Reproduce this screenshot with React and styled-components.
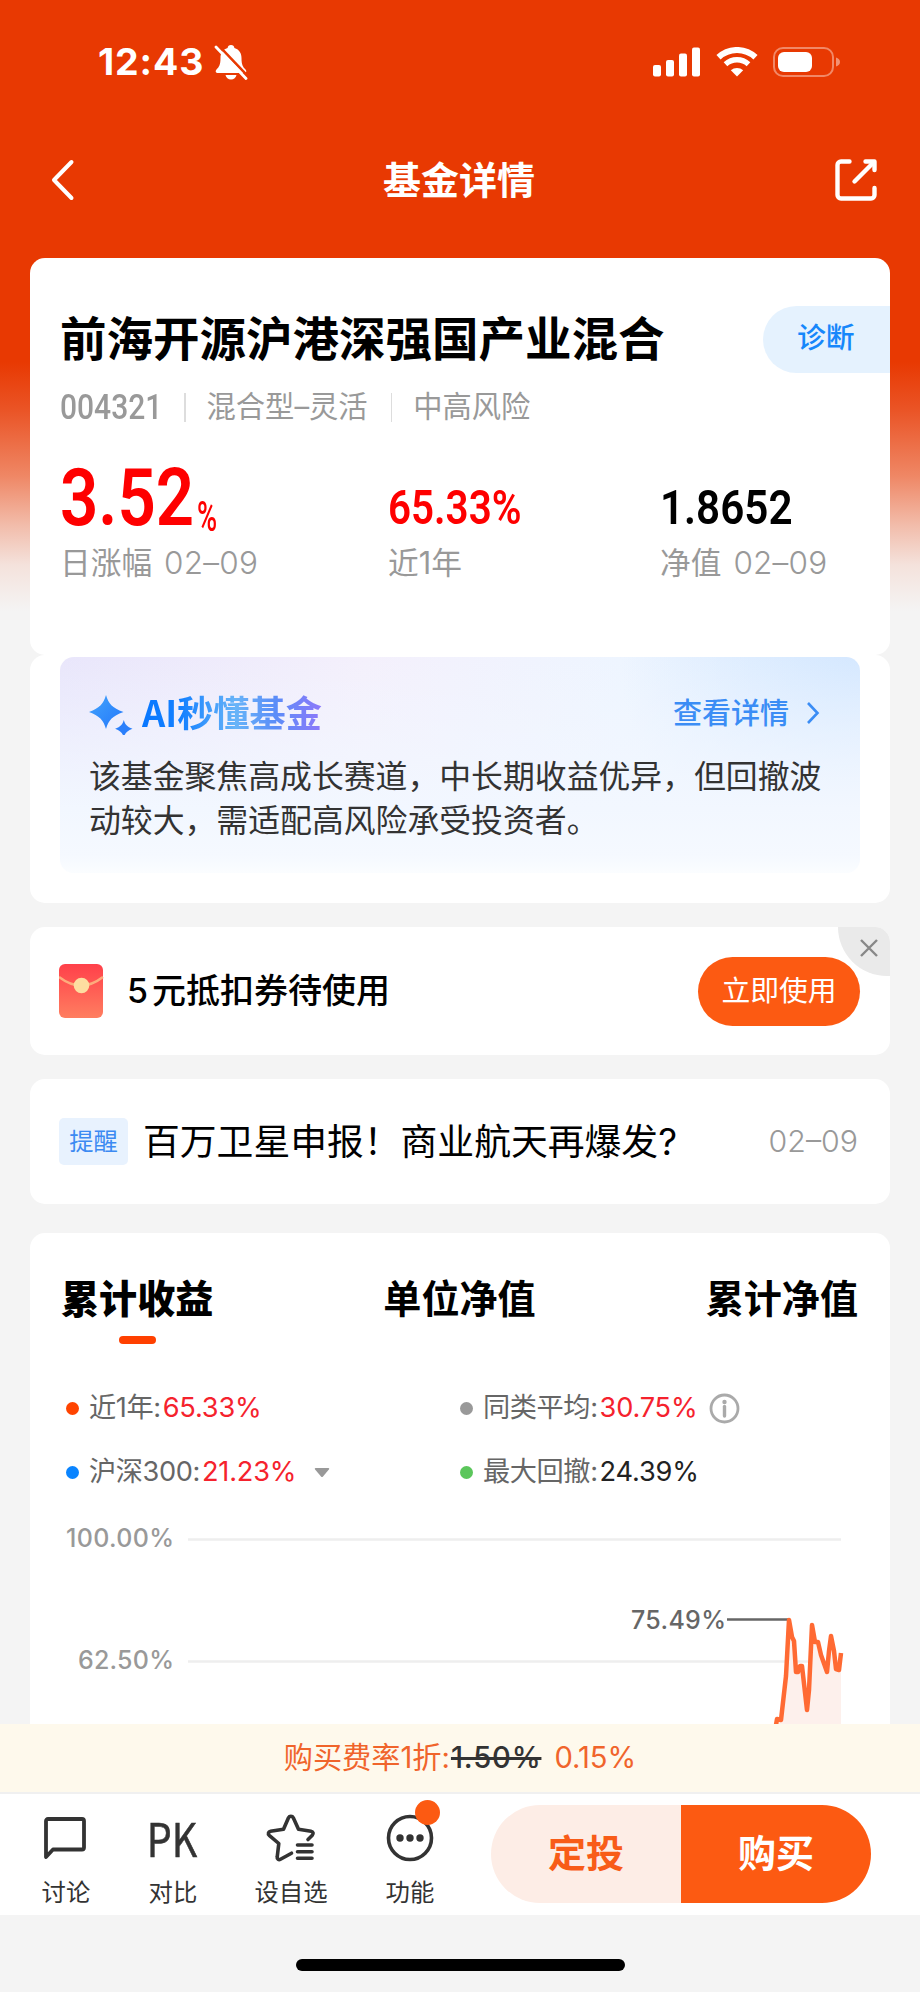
import styled, { createGlobalStyle } from "styled-components";

const GlobalStyle = createGlobalStyle`
  * {
    box-sizing: border-box;
    margin: 0;
    padding: 0;
  }

  body {
    background: #f4f4f4;
    font-family: Inter, "Noto Sans CJK SC", sans-serif;
    line-height: 1;
    color: #000;
  }

  svg {
    display: block;
    flex: none;
  }
`;

const Page = styled.div`
  width: 920px;
  height: 1992px;
  display: flex;
  flex-direction: column;
  overflow: hidden;
  white-space: nowrap;
  background: #f4f4f4;
`;

const Content = styled.main`
  height: 1724px;
  padding: 0 30px;
  overflow: hidden;
  background: linear-gradient(
    180deg,
    #e83902 0,
    #e83902 362px,
    #ea5426 410px,
    #ef8765 476px,
    #f2bcaa 525px,
    #f4e2dc 565px,
    #f4f4f4 612px
  );
`;

const StatusBar = styled.div`
  height: 124px;
  padding: 0 49px 0 68px;
  display: flex;
  align-items: center;
  justify-content: space-between;
  color: #fff;
`;

const StatusGroup = styled.div`
  display: flex;
  align-items: center;
  gap: ${({ $gap }) => $gap}px;
`;

const Clock = styled.span`
  font-size: 37.5px;
  font-weight: 700;
  letter-spacing: 0.9px;
  width: 109px;
`;

const NavBar = styled.header`
  height: 134px;
  padding: 0 13px 22px 21px;
  display: flex;
  align-items: center;
  justify-content: space-between;
  color: #fff;
`;

const NavTitle = styled.h1`
  font-size: 38px;
  font-weight: 700;
  margin-left: 8px;
`;

const Card = styled.section`
  background: #fff;
  border-radius: 15px;
`;

const SummaryCard = styled(Card)`
  height: 397px;
  padding: 48px 0 0 30px;
`;

const SummaryTop = styled.div`
  height: 67px;
  display: flex;
  align-items: center;
  justify-content: space-between;
`;

const FundName = styled.h2`
  font-size: 46.5px;
  font-weight: 600;
`;

const DiagnoseButton = styled.button`
  width: 127px;
  height: 67px;
  padding: 0 0 3px 34px;
  border: 0;
  border-radius: 34px 0 0 34px;
  background: #e5f2fe;
  color: #1687fb;
  font: 500 28.8px/1 Inter, "Noto Sans CJK SC", sans-serif;
  text-align: left;
`;

const MetaRow = styled.div`
  height: 34px;
  margin-top: 17px;
  display: flex;
  align-items: center;
  color: #999;
  font-size: 29.3px;
`;

const MetaDivider = styled.i`
  width: 1.5px;
  height: 29px;
  background: #ddd;
  margin: 0 21px 0 ${({ $left }) => $left}px;
`;

const Figure = styled.span`
  display: inline-block;
  width: ${({ $width }) => $width}px;
  font-family: Roboto, sans-serif;
  font-weight: ${({ $weight }) => $weight || 600};
  font-size: ${({ $size }) => $size}px;
  transform: scaleX(${({ $squeeze }) => $squeeze});
  transform-origin: 0 50%;
`;

const Metrics = styled.div`
  margin-top: 42px;
  display: grid;
  grid-template-columns: 328px 272px 1fr;
`;

const Metric = styled.div`
  color: ${({ $color }) => $color};
`;

const MetricValue = styled.div`
  height: 72px;
  padding-bottom: ${({ $lift }) => $lift || 0}px;
  display: flex;
  align-items: flex-end;
`;

const MetricLabel = styled.div`
  margin-top: 8px;
  display: flex;
  align-items: center;
  height: 34px;
  gap: 12px;
  font-size: 30.7px;
  color: #999;
`;

const ThinNumber = styled.span`
  font-weight: 300;
  font-size: 31.5px;
  letter-spacing: 0.2px;
`;

const AiCard = styled(Card)`
  height: 248px;
  padding: 2px 30px 0;
`;

const AiPanel = styled.div`
  height: 216px;
  padding: 34px 29px 0;
  border-radius: 14px;
  background: linear-gradient(180deg, rgba(255, 255, 255, 0) 0%, #f2f7ff 70%, #f5f9ff 92%, #fbfdff 100%),
    radial-gradient(circle at 100% 0, #d5e8ff 0, rgba(225, 239, 255, 0) 240px),
    linear-gradient(90deg, #e9e6fb 0%, #f4f0fc 38%, #eef5ff 70%, #e5f1ff 100%);
`;

const AiHeader = styled.div`
  height: 44px;
  display: flex;
  align-items: center;
`;

const AiTitle = styled.h3`
  margin: -5px 0 0 9px;
  font-size: 36.2px;
  font-weight: 700;
  line-height: 44px;
  font-family: "Noto Sans CJK SC", sans-serif;
  background: linear-gradient(90deg, #0877ff 0%, #1581ff 22%, #68b4f8 52%, #5b8df8 74%, #8d78fa 100%);
  background-clip: text;
  color: transparent;
`;

const DetailLink = styled.a`
  margin: 0 11px 0 auto;
  display: flex;
  align-items: center;
  gap: 17px;
  font-size: 29px;
  font-weight: 500;
  color: #3b8df5;
`;

const AiText = styled.p`
  margin-top: 20px;
  font-size: 31.85px;
  line-height: 44px;
  color: #333;
`;

const CouponCard = styled(Card)`
  position: relative;
  height: 128px;
  margin-top: 24px;
  padding: 0 30px 0 29px;
  display: flex;
  align-items: center;
  overflow: hidden;
`;

const CouponText = styled.p`
  margin-left: 23px;
  font-size: 34px;
  font-weight: 500;

  span {
    margin-right: 4px;
  }
`;

const UseButton = styled.button`
  width: 162px;
  height: 69px;
  margin-left: auto;
  border: 0;
  border-radius: 35px;
  background: #fc5a12;
  color: #fff;
  font: 400 28.8px/1 Inter, "Noto Sans CJK SC", sans-serif;
`;

const CloseCorner = styled.button`
  position: absolute;
  top: 0;
  right: 0;
  width: 52px;
  height: 49px;
  padding: 0 0 8px 10px;
  display: flex;
  align-items: center;
  justify-content: center;
  border: 0;
  border-radius: 0 0 0 49px;
  background: #eaeaea;
`;

const NewsCard = styled(Card)`
  height: 125px;
  margin-top: 24px;
  padding: 0 32px 0 29px;
  display: flex;
  align-items: center;
`;

const NewsTag = styled.span`
  width: 69px;
  height: 47px;
  margin-top: -1px;
  border-radius: 5px;
  background: #e8f2fe;
  color: #3c8af2;
  font-size: 24.3px;
  line-height: 47px;
  text-align: center;
`;

const NewsTitle = styled.p`
  margin: 1px 0 0 15px;
  font-size: 36.8px;
`;

const NewsDate = styled.span`
  margin-left: auto;
  font-size: 30.3px;
  font-weight: 300;
  color: #999;
`;

const ChartCard = styled(Card)`
  height: 520px;
  margin-top: 29px;
  padding-top: 47px;
`;

const Tabs = styled.div`
  display: flex;
  justify-content: space-between;
  padding: 0 32px 0 31px;
`;

const Tab = styled.div`
  height: 64px;
  display: flex;
  flex-direction: column;
  align-items: center;
  justify-content: space-between;
  font-size: 38.1px;
  font-weight: ${({ $active }) => ($active ? 800 : 600)};

  &::after {
    content: "";
    width: 37px;
    height: 8px;
    border-radius: 4px;
    background: ${({ $active }) => ($active ? "#ff4000" : "transparent")};
  }
`;

const Legend = styled.div`
  margin-top: 32px;
  padding-left: 36px;
  display: grid;
  grid-template-columns: 394px 1fr;
`;

const LegendItem = styled.div`
  height: 64px;
  display: flex;
  align-items: center;
  font-size: 27.2px;
  letter-spacing: -0.4px;
  color: #666;
`;

const LegendDot = styled.i`
  width: 13px;
  height: 13px;
  margin-right: 10px;
  border-radius: 50%;
  background: ${({ $color }) => $color};
`;

const LegendValue = styled.span`
  margin: 0 12px 0 2px;
  letter-spacing: -0.2px;
  color: ${({ $color }) => $color};
`;

const Chart = styled.svg`
  font-family: Inter, sans-serif;
`;

const FeeBar = styled.div`
  height: 68px;
  display: flex;
  align-items: center;
  justify-content: center;
  background: #fef9ec;
  color: #f0642b;
  font-size: 29.2px;

  del {
    color: #333;
    font-weight: 500;
    letter-spacing: 0.8px;
    margin: 0 13px 0 1px;
    text-decoration-thickness: 3px;
  }
`;

const BottomBar = styled.footer`
  height: 123px;
  padding: 11px 49px 0 25px;
  display: flex;
  justify-content: space-between;
  border-top: 2px solid #f0f0f0;
  background: #fff;
`;

const Actions = styled.nav`
  display: flex;
`;

const Action = styled.div`
  position: relative;
  width: ${({ $width }) => $width}px;
  display: flex;
  flex-direction: column;
  align-items: center;
  color: #333;
  font-size: 24.4px;
`;

const ActionIcon = styled.div`
  height: 62px;
  padding-top: 4px;
  display: flex;
  align-items: center;
  justify-content: center;
  margin-bottom: 13px;
`;

const PkText = styled.span`
  margin: -4px 0 0 -2px;
  font: 400 47px/1 "Noto Sans CJK SC", sans-serif;
  transform: scaleX(0.84);
  -webkit-text-stroke: 0.5px #333;
`;

const RedDot = styled.i`
  position: absolute;
  top: -5px;
  left: 72px;
  width: 25px;
  height: 25px;
  border-radius: 50%;
  background: #fc5a12;
`;

const BuyGroup = styled.div`
  width: 380px;
  height: 98px;
  display: flex;
  border-radius: 49px;
  overflow: hidden;
`;

const BuyButton = styled.button`
  flex: 1;
  border: 0;
  padding-bottom: 2px;
  font: 700 38px/1 Inter, "Noto Sans CJK SC", sans-serif;
  background: ${({ $primary }) => ($primary ? "#fc5a12" : "#fdede6")};
  color: ${({ $primary }) => ($primary ? "#fff" : "#f85c18")};
`;

const HomeArea = styled.div`
  flex: 1;
  display: flex;
  justify-content: center;
  padding-top: 44px;
`;

const HomeIndicator = styled.div`
  width: 329px;
  height: 12px;
  border-radius: 6px;
  background: #000;
`;

const BellOffIcon = () => (
  <svg width="34" height="36" viewBox="0 0 34 36">
    <path
      d="M17 1c-2 0-3.200 1.300-3.400 3C8.500 5.500 6.500 9.500 6.500 14c0 7-1.500 9-4 11.500-1.500 1.700-.7 3.500 1.300 3.500h26.400c2 0 2.800-1.800 1.300-3.500C29 23 27.500 21 27.500 14c0-4.500-2-8.500-7.100-10C20.200 2.300 19 1 17 1z"
      fill="#fff"
    />
    <path d="M11.500 31h11c-.5 2.700-2.700 4.500-5.500 4.500s-5-1.800-5.500-4.500z" fill="#fff" />
    <path d="M4.500 1.300 34.500 32.800" stroke="#e83902" strokeWidth="2.600" />
    <path d="M2 3 32 34.500" stroke="#fff" strokeWidth="2.800" strokeLinecap="round" />
  </svg>
);

const SignalIcon = () => (
  <svg width="48" height="30" viewBox="0 0 48 30" fill="#fff">
    <rect x="0" y="18" width="8" height="11.500" rx="2" />
    <rect x="13" y="13" width="8" height="16.500" rx="2" />
    <rect x="26" y="6.500" width="8" height="23" rx="2" />
    <rect x="39" y="0.500" width="8" height="29" rx="2" />
  </svg>
);

const WifiIcon = () => (
  <svg width="42" height="30" viewBox="0 0 42 30" fill="none" stroke="#fff">
    <path d="M2.500 10.300A27 27 0 0 1 39.500 10.300" strokeWidth="6" />
    <path d="M9.500 17.300A17 17 0 0 1 32.500 17.300" strokeWidth="5.400" />
    <path d="M14.800 23.200a9.500 9.500 0 0 1 12.400 0L21 29.500z" fill="#fff" stroke="none" />
  </svg>
);

const BatteryIcon = () => (
  <svg width="68" height="30" viewBox="0 0 68 30">
    <rect x="1" y="1" width="59" height="28" rx="9" fill="none" stroke="#fff" strokeOpacity=".4" strokeWidth="2" />
    <rect x="5" y="5" width="34" height="20" rx="6" fill="#fff" />
    <path d="M63 10.500c2.500.8 4 2.500 4 4.500s-1.500 3.700-4 4.500z" fill="#fff" fillOpacity=".45" />
  </svg>
);

const BackIcon = () => (
  <svg width="24" height="42" viewBox="0 0 24 42" fill="none" stroke="#fff" strokeWidth="4" strokeLinecap="round" strokeLinejoin="round">
    <path d="M20.500 3 3 21l17.500 18" />
  </svg>
);

const ShareIcon = () => (
  <svg width="42" height="42" viewBox="0 0 42 42" fill="none" stroke="#fff" strokeWidth="4.400" strokeLinecap="round" strokeLinejoin="round">
    <path d="M14.500 2.500H6a3.500 3.500 0 0 0-3.500 3.500v30A3.500 3.500 0 0 0 6 39.500h30a3.500 3.500 0 0 0 3.500-3.500v-7" />
    <path d="M30.500 2.500h9V11" />
    <path d="M38.500 3.500 19.500 22.500" />
  </svg>
);

const SparkleIcon = () => (
  <svg width="44" height="44" viewBox="0 0 44 44">
    <defs>
      <linearGradient id="spark" x1="0" y1="0" x2="1" y2="1">
        <stop offset="0" stopColor="#43a4fc" />
        <stop offset="1" stopColor="#2377fb" />
      </linearGradient>
    </defs>
    <path d="M17 4c2.500 8.500 6 13 17.500 17C23 25 19.500 29.500 17 38 14.500 29.500 11 25 0 21c11-4 14.500-8.500 17-17z" fill="url(#spark)" />
    <path d="M34.800 29c1.200 4.300 3.300 6.800 8.700 8.700-5.400 1.900-7.500 4.400-8.700 8.700-1.200-4.300-3.300-6.800-8.700-8.700 5.400-1.900 7.500-4.400 8.700-8.700z" fill="#2b7ffb" />
  </svg>
);

const ChevronIcon = () => (
  <svg width="14" height="24" viewBox="0 0 14 24" fill="none" stroke="#3b8df5" strokeWidth="2.600">
    <path d="M2 2l9.500 10L2 22" />
  </svg>
);

const EnvelopeIcon = () => (
  <svg width="45" height="54" viewBox="0 0 45 54">
    <defs>
      <linearGradient id="envelope" x1="0" y1="0" x2="0" y2="1">
        <stop offset="0" stopColor="#ff404a" />
        <stop offset="1" stopColor="#ff7e60" />
      </linearGradient>
    </defs>
    <rect x="0" width="44" height="54" rx="6" fill="url(#envelope)" />
    <path d="M0 13Q22 30 44 13" fill="none" stroke="#fdab7c" strokeWidth="2.500" />
    <circle cx="22.500" cy="21.500" r="7.800" fill="#fddda0" />
  </svg>
);

const CloseIcon = () => (
  <svg width="18" height="18" viewBox="0 0 18 18" stroke="#888" strokeWidth="2.400">
    <path d="M1 1l16 16M17 1 1 17" />
  </svg>
);

const InfoIcon = () => (
  <svg width="31" height="31" viewBox="0 0 31 31">
    <circle cx="15.500" cy="15.500" r="13.500" fill="none" stroke="#aaa" strokeWidth="2.800" />
    <circle cx="15.500" cy="9" r="2.200" fill="#aaa" />
    <path d="M15.500 13.500v9.500" stroke="#aaa" strokeWidth="3.400" strokeLinecap="round" />
  </svg>
);

const CaretIcon = () => (
  <svg width="24" height="11" viewBox="-6 0 24 11">
    <path d="M1.500 1h13a.8.8 0 0 1 .6 1.300L9 9.500a1.400 1.400 0 0 1-2 0L.9 2.300A.8.8 0 0 1 1.500 1z" fill="#999" />
  </svg>
);

const CommentIcon = () => (
  <svg width="44" height="44" viewBox="0 0 44 44" fill="none" stroke="#333" strokeWidth="3.800" strokeLinejoin="round">
    <path d="M2 41V5a2 2 0 0 1 2-2h34a2 2 0 0 1 2 2v26.500a2 2 0 0 1-2 2H9z" />
  </svg>
);

const StarListIcon = () => (
  <svg width="50" height="50" viewBox="0 0 50 50" fill="none" stroke="#333" strokeWidth="3.600" strokeLinecap="round" strokeLinejoin="round">
    <path d="M25.500 40.200 14.500 46.300c-1.800 1-3.600-.2-3.300-2.200L12.800 30.500 3.200 22.300c-1.500-1.500-.8-3.700 1.300-4L17.500 16.300 22.500 4.700c1-2 3.800-2 4.800 0L32.500 16.300 45 18.300c2.200.4 2.800 2.500 1.300 4L42 26.500" />
    <path d="M31.500 32H46M31.500 38.700H46M31.500 45.300H46" />
  </svg>
);

const MoreIcon = () => (
  <svg width="48" height="48" viewBox="0 0 48 48">
    <circle cx="24" cy="24" r="21.500" fill="none" stroke="#333" strokeWidth="3.600" />
    <circle cx="14" cy="24" r="3.700" fill="#333" />
    <circle cx="24" cy="24" r="3.700" fill="#333" />
    <circle cx="34" cy="24" r="3.700" fill="#333" />
  </svg>
);

const linePoints =
  "746,221 747,215 751,216 756,172 759,116 762,133 764,137 766,168 768,168 770,162 772,162 777,206 779,186 782,121 785,138 788,138 791,151 797,168 799,147 801,132 804,147 806,165 809,166 811,149";

const ReturnChart = () => (
  <Chart width="860" height="221" viewBox="0 0 860 221">
    <path d="M158 35.500H811M158 157.500H811" stroke="#eee" strokeWidth="2.500" />
    <g fill="#999" fontSize="25" fontWeight="500" textAnchor="end">
      <text x="144" y="43" textLength="108">100.00%</text>
      <text x="144" y="165" textLength="96">62.50%</text>
    </g>
    <polygon points={`${linePoints} 811,221`} fill="#fdf0ec" />
    <path d="M697 115.500H760" stroke="#666" strokeWidth="2.500" />
    <text x="696" y="125" fill="#666" fontSize="25" fontWeight="500" textAnchor="end" textLength="95">
      75.49%
    </text>
    <polyline points={linePoints} fill="none" stroke="#ff6a33" strokeWidth="4.500" strokeLinejoin="round" />
  </Chart>
);

const tabs = ["累计收益", "单位净值", "累计净值"];

const legend = [
  { label: "近1年:", value: "65.33%", dot: "#ff4400", color: "#f5222d" },
  { label: "同类平均:", value: "30.75%", dot: "#999", color: "#f5222d", icon: <InfoIcon /> },
  { label: "沪深300:", value: "21.23%", dot: "#0a84ff", color: "#f5222d", icon: <CaretIcon /> },
  { label: "最大回撤:", value: "24.39%", dot: "#5bc65b", color: "#222" },
];

const actions = [
  { label: "讨论", width: 82, icon: <CommentIcon /> },
  { label: "对比", width: 132, icon: <PkText>PK</PkText> },
  { label: "设自选", width: 104, icon: <StarListIcon /> },
  { label: "功能", width: 134, icon: <MoreIcon />, dot: true },
];

const App = () => {
  return (
    <>
      <GlobalStyle />
      <Page>
        <Content>
          <StatusBar>
            <StatusGroup $gap={7}>
              <Clock>12:43</Clock>
              <BellOffIcon />
            </StatusGroup>
            <StatusGroup $gap={15}>
              <SignalIcon />
              <WifiIcon />
              <BatteryIcon />
            </StatusGroup>
          </StatusBar>
          <NavBar>
            <BackIcon />
            <NavTitle>基金详情</NavTitle>
            <ShareIcon />
          </NavBar>

          <SummaryCard>
            <SummaryTop>
              <FundName>前海开源沪港深强国产业混合</FundName>
              <DiagnoseButton>诊断</DiagnoseButton>
            </SummaryTop>
            <MetaRow>
              <Figure $width={99} $size={34.5} $squeeze={0.87} $weight={500}>
                004321
              </Figure>
              <MetaDivider $left={25} />
              混合型–灵活
              <MetaDivider $left={23} />
              中高风险
            </MetaRow>
            <Metrics>
              <Metric $color="#fe0000">
                <MetricValue>
                  <Figure $width={137} $size={79} $squeeze={0.85}>
                    3.52
                  </Figure>
                  <Figure $width={20} $size={42} $squeeze={0.65} $weight={500}>
                    %
                  </Figure>
                </MetricValue>
                <MetricLabel>
                  日涨幅 <ThinNumber>02–09</ThinNumber>
                </MetricLabel>
              </Metric>
              <Metric $color="#fe0000">
                <MetricValue $lift={6}>
                  <Figure $width={131} $size={48.5} $squeeze={0.832}>
                    65.33%
                  </Figure>
                </MetricValue>
                <MetricLabel>近1年</MetricLabel>
              </Metric>
              <Metric $color="#000">
                <MetricValue $lift={6}>
                  <Figure $width={131} $size={48.5} $squeeze={0.87}>
                    1.8652
                  </Figure>
                </MetricValue>
                <MetricLabel>
                  净值 <ThinNumber>02–09</ThinNumber>
                </MetricLabel>
              </Metric>
            </Metrics>
          </SummaryCard>

          <AiCard>
            <AiPanel>
              <AiHeader>
                <SparkleIcon />
                <AiTitle>AI秒懂基金</AiTitle>
                <DetailLink>
                  查看详情
                  <ChevronIcon />
                </DetailLink>
              </AiHeader>
              <AiText>
                该基金聚焦高成长赛道，中长期收益优异，但回撤波
                <br />
                动较大，需适配高风险承受投资者。
              </AiText>
            </AiPanel>
          </AiCard>

          <CouponCard>
            <EnvelopeIcon />
            <CouponText>
              <span>5</span>元抵扣券待使用
            </CouponText>
            <UseButton>立即使用</UseButton>
            <CloseCorner>
              <CloseIcon />
            </CloseCorner>
          </CouponCard>

          <NewsCard>
            <NewsTag>提醒</NewsTag>
            <NewsTitle>百万卫星申报！商业航天再爆发?</NewsTitle>
            <NewsDate>02–09</NewsDate>
          </NewsCard>

          <ChartCard>
            <Tabs>
              {tabs.map((tab, i) => (
                <Tab key={tab} $active={i === 0}>
                  {tab}
                </Tab>
              ))}
            </Tabs>
            <Legend>
              {legend.map((item) => (
                <LegendItem key={item.label}>
                  <LegendDot $color={item.dot} />
                  {item.label}
                  <LegendValue $color={item.color}>{item.value}</LegendValue>
                  {item.icon}
                </LegendItem>
              ))}
            </Legend>
            <ReturnChart />
          </ChartCard>
        </Content>

        <FeeBar>
          购买费率1折:<del>1.50%</del>0.15%
        </FeeBar>

        <BottomBar>
          <Actions>
            {actions.map((action) => (
              <Action key={action.label} $width={action.width}>
                <ActionIcon>{action.icon}</ActionIcon>
                {action.label}
                {action.dot && <RedDot />}
              </Action>
            ))}
          </Actions>
          <BuyGroup>
            <BuyButton>定投</BuyButton>
            <BuyButton $primary>购买</BuyButton>
          </BuyGroup>
        </BottomBar>

        <HomeArea>
          <HomeIndicator />
        </HomeArea>
      </Page>
    </>
  );
};

export default App;
